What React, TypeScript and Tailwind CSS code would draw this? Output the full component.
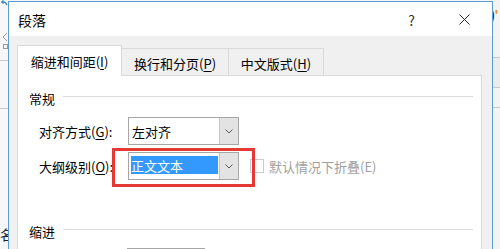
import React from "react";

const FONT = "font-['Microsoft_YaHei','Noto_Sans_CJK_SC',sans-serif]";

function Chevron() {
  return (
    <svg width="8" height="5" viewBox="0 0 8 5" className="text-[#5a5a5a]">
      <path d="M0.5 0.5 L4 4 L7.5 0.5" fill="none" stroke="currentColor" strokeWidth="1" />
    </svg>
  );
}

function Select({
  width,
  children,
  highlighted,
}: {
  width: string;
  children?: React.ReactNode;
  highlighted?: boolean;
}) {
  return (
    <div className={`flex h-[28px] ${width} border border-[#a6a6a6] bg-white`}>
      <div className="flex flex-1 items-start pl-[2px] pr-px pt-[3px]">
        {highlighted ? (
          <div className="flex h-[18px] w-full items-center bg-[#3399ff] text-[13px] leading-none text-white">
            {children}
          </div>
        ) : (
          <div className="flex h-[20px] items-center pl-px text-[13px] leading-none text-black">{children}</div>
        )}
      </div>
      <div className="flex w-[19px] items-center justify-center border-l border-[#c6c6c6] bg-[#e3e3e3]">
        <Chevron />
      </div>
    </div>
  );
}

function Key({ k }: { k: string }) {
  return (
    <>
      (<span className="underline underline-offset-2">{k}</span>)
    </>
  );
}

function SectionTitle({ title }: { title: string }) {
  return (
    <div className="flex h-[16px] items-center pl-[11px] pr-[8px]">
      <span className="text-[13px] leading-none text-black">{title}</span>
      <div className="mb-[3px] ml-[8px] h-px flex-1 bg-[#dcdcdc]" />
    </div>
  );
}

function LeftStrip() {
  return (
    <div className="flex w-[8px] shrink-0 flex-col bg-[#f7f7f7]">
      <svg width="8" height="7" viewBox="0 0 8 7">
        <path d="M7 5 C6 2 4 1.5 1.5 2 M1.5 2 L3.5 0.5 M1.5 2 L3.5 3.5" fill="none" stroke="#3f7fcf" strokeWidth="1.2" />
      </svg>
      <svg width="8" height="22" viewBox="0 0 8 22" className="mt-[24px]">
        <path d="M7 2 L3 6 L7 10" fill="none" stroke="#9a9a9a" strokeWidth="1" />
        <rect x="3.5" y="13.5" width="4" height="4" fill="none" stroke="#9a9a9a" />
      </svg>
      <div className="mt-[7px] h-px bg-[#c9c9c9]" />
      <div className="mt-[47px] h-px bg-[#c9c9c9]" />
      <div className="mt-[118px] flex h-[16px] justify-end overflow-hidden">
        <span className="-mr-[6px] text-[14px] leading-none text-[#222]">名</span>
      </div>
    </div>
  );
}

function RightStrip() {
  return (
    <div className="flex w-[7px] shrink-0 flex-col bg-[#f4f4f4]">
      <div className="mt-[8px] flex h-[14px] overflow-hidden">
        <span className="-ml-[3px] font-['Liberation_Sans',sans-serif] text-[14px] font-bold leading-none text-[#2a2a2a]">
          )<span className="text-[#e08a3c]">'</span>
        </span>
      </div>
      <div className="mt-[35px] h-px bg-[#c8c8c8]" />
      <div className="h-[29px] bg-[#ececec]" />
      <div className="h-px bg-[#c8c8c8]" />
      <div className="mt-[19px] h-px bg-[#c8c8c8]" />
    </div>
  );
}

export default function App() {
  return (
    <div className={`flex h-[249px] w-[500px] overflow-hidden bg-[#f7f7f7] ${FONT}`}>
      <LeftStrip />
      <div className="mt-px flex h-[270px] w-[485px] shrink-0 flex-col border border-[#5b9bd5] bg-[#f0f0f0]">
        {/* title bar */}
        <div className="flex h-[34px] shrink-0 items-center bg-white pl-[9px]">
          <span className="flex-1 pt-px text-[14px] leading-none text-black">段落</span>
          <span className="pt-px text-[14px] leading-none text-[#333]">?</span>
          <svg width="11" height="11" viewBox="0 0 11 11" className="ml-[44px] mr-[22px]">
            <path d="M0.5 0.5 L10.5 10.5 M10.5 0.5 L0.5 10.5" stroke="#222" strokeWidth="1" />
          </svg>
        </div>

        <div className="flex flex-1 flex-col pl-[8px] pr-[10px] pt-[9px]">
          {/* tabs */}
          <div className="flex h-[30px] items-end">
            <div className="relative z-10 -mb-px flex h-[31px] w-[105px] items-start justify-center border-x border-t border-[#d9d9d9] bg-white pt-[9px] text-[13px] leading-none text-black">
              <span>
                缩进和间距<Key k="I" />
              </span>
            </div>
            <div className="flex h-[27px] w-[107px] items-start justify-center border-r border-t border-[#d9d9d9] bg-[#f0f0f0] pt-[8px] text-[13px] leading-none text-black">
              <span>
                换行和分页<Key k="P" />
              </span>
            </div>
            <div className="flex h-[27px] w-[95px] items-start justify-center border-r border-t border-[#d9d9d9] bg-[#f0f0f0] pt-[8px] text-[13px] leading-none text-black">
              <span>
                中文版式<Key k="H" />
              </span>
            </div>
          </div>

          {/* panel */}
          <div className="flex w-[465px] flex-1 flex-col border border-[#d9d9d9] bg-white pt-[14px]">
            <SectionTitle title="常规" />

            <div className="mt-[11px] flex items-center pl-[21px]">
              <span className="w-[89px] text-[13px] leading-none text-black">
                对齐方式<Key k="G" />:
              </span>
              <Select width="w-[111px]">左对齐</Select>
            </div>

            <div className="relative mt-[7px] flex items-center pl-[21px]">
              <span className="w-[89px] text-[13px] leading-none text-black">
                大纲级别<Key k="O" />:
              </span>
              <Select width="w-[111px]" highlighted>
                正文文本
              </Select>
              <div className="ml-[11px] h-[14px] w-[14px] border border-[#cccccc] bg-white" />
              <span className="ml-[5px] text-[13px] leading-none text-[#a0a0a0]">默认情况下折叠(E)</span>
              <div className="absolute left-[94px] top-[-4px] h-[39px] w-[143px] border-[3px] border-[#e53935]" />
            </div>

            <div className="mt-[43px]">
              <SectionTitle title="缩进" />
            </div>

            <div className="mt-[9px] flex items-center pl-[109px]">
              <Select width="w-[78px]" />
            </div>
          </div>
        </div>
      </div>
      <RightStrip />
    </div>
  );
}
